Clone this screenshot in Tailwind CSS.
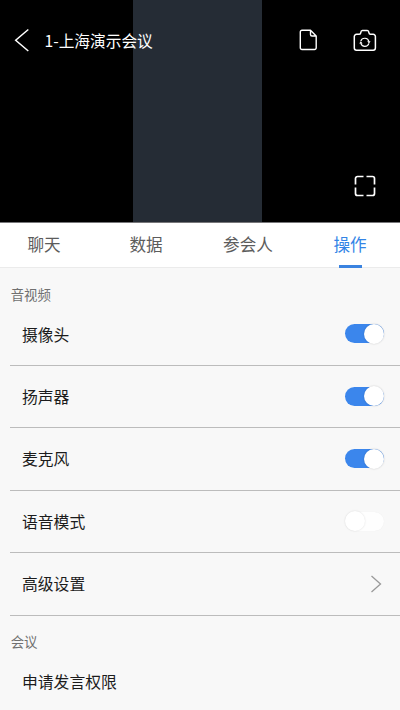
<!DOCTYPE html>
<html lang="zh-CN">
<head>
<meta charset="utf-8">
<meta name="viewport" content="width=device-width, initial-scale=1">
<title>1-上海演示会议</title>
<script src="https://cdn.jsdelivr.net/npm/@tailwindcss/browser@4"></script>
</head>
<body class="bg-[#f8f8f8] font-['Noto_Sans_CJK_SC',sans-serif] overflow-hidden">
<div class="w-[400px] h-[710px] overflow-hidden flex flex-col">
  <header class="h-[223px] shrink-0 bg-black flex relative">
    <div class="ml-[133px] w-[129px] h-full bg-[#252c35]"></div>
    <div class="absolute inset-0 flex flex-col justify-between text-white border-b border-[#77777a]">
      <div class="h-[80px] flex items-center pl-[14px] pr-[23px]">
        <svg class="w-4 h-6" viewBox="0 0 16 24" fill="none" stroke="#fff" stroke-width="1.5"><path d="M14.3 1.5 1.7 12.2 14.3 23"/></svg>
        <h1 class="ml-[14.5px] pt-px text-[15.7px] leading-6 flex-1 whitespace-nowrap">1-上海演示会议</h1>
        <svg class="w-5 h-6 mr-[35.5px]" viewBox="0 0 20 24" fill="none" stroke="#fff" stroke-width="1.4" stroke-linejoin="round"><path d="M12.5 2.3H4a1.7 1.7 0 0 0-1.7 1.7v15.8a1.7 1.7 0 0 0 1.7 1.7h12.5a1.7 1.7 0 0 0 1.7-1.7V8zM12.5 2.3V6.5a1.5 1.5 0 0 0 1.5 1.500H18.2"/></svg>
        <svg class="w-6 h-6" viewBox="0 0 24 24" fill="none" stroke="#fff" stroke-width="1.5" stroke-linejoin="round"><path d="M3.5 6.300H6.200Q7.600 6.300 7.800 4.600Q8 2.500 9.400 2.500H14.300Q15.700 2.500 15.900 4.600Q16.100 6.300 17.500 6.300H20.200A2.200 2.200 0 0 1 22.400 8.500V20A2.200 2.200 0 0 1 20.200 22.200H3.500A2.200 2.200 0 0 1 1.300 20V8.500A2.200 2.200 0 0 1 3.500 6.300Z"/><path stroke-width="1.200" d="M7.800 13.100A4.200 4.200 0 0 1 15.900 13.600M15.900 15.400A4.200 4.200 0 0 1 7.800 15.200"/><path fill="#fff" stroke="none" d="M14.200 13.200H17.600L16 15.400ZM6.200 15.400H9.600L7.800 13.200Z"/></svg>
      </div>
      <div class="flex justify-end pr-6 pb-[25px]">
        <svg class="w-[22px] h-[22px]" viewBox="0 0 22 22" fill="none" stroke="#fff" stroke-width="1.7"><path d="M9.500 1.500H3.500A2 2 0 0 0 1.500 3.500V9.500M12.500 1.500H18.500A2 2 0 0 1 20.500 3.500V9.500M20.500 12.500V18.500A2 2 0 0 1 18.500 20.500H12.500M9.500 20.500H3.500A2 2 0 0 1 1.500 18.500V12.500"/></svg>
      </div>
    </div>
  </header>
  <nav class="h-[45px] shrink-0 bg-white border-b border-[#ebebeb]">
    <div class="w-[408px] -ml-[7px] h-[44px] grid grid-cols-4 text-center text-[16.6px] leading-[42px] text-[#5c5c5c]">
      <a>聊天</a><a>数据</a><a>参会人</a>
      <a class="text-[#3384e6] flex flex-col items-center"><span class="h-[42px]">操作</span><span class="w-[23px] h-[3px] shrink-0 bg-[#3a83e0]"></span></a>
    </div>
  </nav>
  <main class="pl-[10px] text-[15.8px] text-[#1c1c1c]">
    <h2 class="h-[36px] pl-[0.7px] pt-[16px] text-[13.4px] leading-5 text-[#707070]">音视频</h2>
    <div class="h-[62px] pl-3 pr-4 flex items-center justify-between border-b border-[#bcbcbc]"><span>摄像头</span><span class="mb-[2px] w-[39px] h-[19px] rounded-full bg-[#3b86ec] flex justify-end items-center"><i class="size-5 shrink-0 rounded-full bg-white shadow-[0_0_2px_#0003]"></i></span></div>
    <div class="h-[62.4px] pl-3 pr-4 flex items-center justify-between border-b border-[#bcbcbc]"><span>扬声器</span><span class="mb-px w-[39px] h-[19px] rounded-full bg-[#3b86ec] flex justify-end items-center"><i class="size-5 shrink-0 rounded-full bg-white shadow-[0_0_2px_#0003]"></i></span></div>
    <div class="h-[62.4px] pl-3 pr-4 flex items-center justify-between border-b border-[#bcbcbc]"><span>麦克风</span><span class="mb-px w-[39px] h-[19px] rounded-full bg-[#3b86ec] flex justify-end items-center"><i class="size-5 shrink-0 rounded-full bg-white shadow-[0_0_2px_#0003]"></i></span></div>
    <div class="h-[62.4px] pl-3 pr-4 flex items-center justify-between border-b border-[#bcbcbc]"><span>语音模式</span><span class="w-[39px] h-[19px] rounded-full bg-[#fefefe] shadow-[0_0_1px_#0001] flex items-center"><i class="size-5 shrink-0 rounded-full bg-white shadow-[0_0_2px_#0002]"></i></span></div>
    <div class="h-[62.4px] pl-3 pr-[18px] flex items-center justify-between border-b border-[#bcbcbc]"><span>高级设置</span><svg class="w-3 h-[18px]" viewBox="0 0 12 18" fill="none" stroke="#999" stroke-width="1.3"><path d="M1.500 1 10.500 9 1.500 17"/></svg></div>
    <h2 class="h-[35px] pl-[0.7px] pt-[15px] text-[13.4px] leading-5 text-[#707070]">会议</h2>
    <div class="h-[62px] pl-3 flex items-center"><span>申请发言权限</span></div>
  </main>
</div>
</body>
</html>
